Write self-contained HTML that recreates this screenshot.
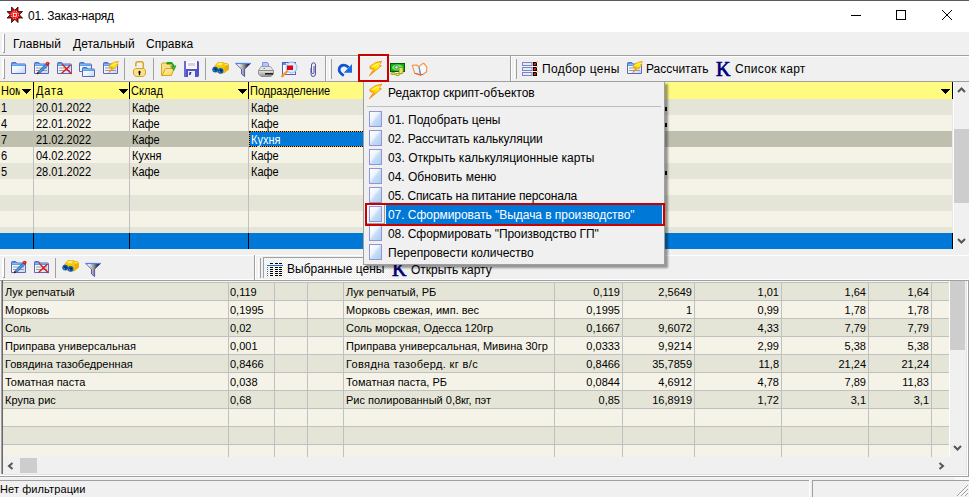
<!DOCTYPE html>
<html><head><meta charset="utf-8">
<style>
*{margin:0;padding:0;box-sizing:border-box}
html,body{width:969px;height:497px;overflow:hidden;background:#f0f0f0;font-family:"Liberation Sans",sans-serif;position:relative}
.a{position:absolute}
.t12{font-size:12px;color:#000;white-space:nowrap;line-height:14px}
.t11{font-size:11px;color:#000;white-space:nowrap;line-height:13px}
.r{text-align:right}
.sy{transform:scaleY(1.125);transform-origin:0 0}
svg{position:absolute;overflow:visible}
</style></head><body>

<svg width="0" height="0" style="position:absolute"><defs>
<linearGradient id="fb" x1="0" y1="0" x2="1" y2="1"><stop offset="0" stop-color="#ffffff"/><stop offset="0.5" stop-color="#eef5fd"/><stop offset="1" stop-color="#b8d8f6"/></linearGradient>
<linearGradient id="sq" x1="0" y1="0" x2="1" y2="1"><stop offset="0" stop-color="#ffffff"/><stop offset="0.4" stop-color="#eef5fd"/><stop offset="0.55" stop-color="#c4dcf6"/><stop offset="1" stop-color="#a4d0f2"/></linearGradient>
<linearGradient id="lt" x1="0.8" y1="0" x2="0.2" y2="1"><stop offset="0" stop-color="#ffd000"/><stop offset="0.4" stop-color="#ffee00"/><stop offset="1" stop-color="#ff7800"/></linearGradient>
<linearGradient id="fun" x1="0" y1="0" x2="1" y2="0"><stop offset="0.2" stop-color="#ffffff"/><stop offset="0.55" stop-color="#909090"/><stop offset="0.85" stop-color="#202020"/></linearGradient>
<linearGradient id="yf" x1="0" y1="0" x2="1" y2="1"><stop offset="0" stop-color="#fff2b0"/><stop offset="1" stop-color="#f0d060"/></linearGradient>
<linearGradient id="pr" x1="0" y1="0" x2="0" y2="1"><stop offset="0" stop-color="#e8e8e8"/><stop offset="1" stop-color="#909090"/></linearGradient>
</defs></svg>
<div class="a" style="left:0px;top:0px;width:969px;height:1px;background:#5c5c5c;"></div>
<div class="a" style="left:0px;top:1px;width:969px;height:31px;background:#fff;"></div>
<div class="a t12" style="left:28px;top:9px;letter-spacing:-0.2px">01. Заказ-наряд</div>
<svg style="left:7px;top:7px" width="16" height="16" viewBox="0 0 16 16"><polygon transform="translate(0.3,0.3)" points="4.29,-0.26 7.50,3.00 10.71,-0.26 10.68,4.32 15.26,4.29 12.00,7.50 15.26,10.71 10.68,10.68 10.71,15.26 7.50,12.00 4.29,15.26 4.32,10.68 -0.26,10.71 3.00,7.50 -0.26,4.29 4.32,4.32" fill="#f00000" stroke="#000" stroke-width="0.8" stroke-linejoin="miter" stroke-miterlimit="10"/><circle cx="7.8" cy="7.8" r="3.6" fill="none" stroke="#fff" stroke-width="0.9" stroke-dasharray="1.1 1.1"/><rect x="6.3" y="6.3" width="3" height="3" fill="none" stroke="#fff" stroke-width="1"/><rect x="7.3" y="7.3" width="1" height="1" fill="#f00"/></svg>
<svg style="left:850px;top:9px" width="12" height="12"><path d="M1 6.5H11" stroke="#000" stroke-width="1"/></svg>
<svg style="left:895px;top:9px" width="12" height="12"><rect x="1.5" y="1.5" width="9" height="9" fill="none" stroke="#000" stroke-width="1"/></svg>
<svg style="left:941px;top:9px" width="12" height="12"><path d="M1 1L11 11M11 1L1 11" stroke="#000" stroke-width="1"/></svg>
<div class="a" style="left:0px;top:32px;width:969px;height:23px;background:#f0f0f0;"></div>
<div class="a" style="left:2px;top:34px;width:2px;height:19px;background:#fff;"></div>
<div class="a" style="left:4px;top:34px;width:1px;height:19px;background:#a0a0a0;"></div>
<div class="a" style="left:3px;top:52px;width:1px;height:1px;background:#a0a0a0;"></div>
<div class="a t12" style="left:13px;top:37px;">Главный</div>
<div class="a t12" style="left:73px;top:37px;">Детальный</div>
<div class="a t12" style="left:146px;top:37px;">Справка</div>
<div class="a" style="left:0px;top:55px;width:969px;height:1px;background:#a0a0a0;"></div>
<div class="a" style="left:0px;top:56px;width:969px;height:1px;background:#fff;"></div>
<div class="a" style="left:0px;top:81px;width:969px;height:1px;background:#a0a0a0;"></div>
<div class="a" style="left:2px;top:59px;width:2px;height:20px;background:#fff;"></div>
<div class="a" style="left:4px;top:59px;width:1px;height:20px;background:#a0a0a0;"></div>
<div class="a" style="left:3px;top:78px;width:1px;height:1px;background:#a0a0a0;"></div>
<div class="a" style="left:124px;top:58px;width:1px;height:22px;background:#a0a0a0;"></div>
<div class="a" style="left:153px;top:58px;width:1px;height:22px;background:#a0a0a0;"></div>
<div class="a" style="left:205px;top:58px;width:1px;height:22px;background:#a0a0a0;"></div>
<div class="a" style="left:325px;top:55px;width:1px;height:26px;background:#a0a0a0;"></div>
<div class="a" style="left:326px;top:56px;width:1px;height:25px;background:#fff;"></div>
<div class="a" style="left:329px;top:59px;width:1px;height:20px;background:#fff;"></div>
<div class="a" style="left:331px;top:59px;width:1px;height:20px;background:#a0a0a0;"></div>
<div class="a" style="left:510px;top:55px;width:1px;height:26px;background:#a0a0a0;"></div>
<div class="a" style="left:511px;top:56px;width:1px;height:25px;background:#fff;"></div>
<div class="a" style="left:514px;top:59px;width:1px;height:20px;background:#fff;"></div>
<div class="a" style="left:516px;top:59px;width:1px;height:20px;background:#a0a0a0;"></div>
<div class="a t12" style="left:542px;top:62px;letter-spacing:0.3px">Подбор цены</div>
<div class="a t12" style="left:646px;top:62px;">Рассчитать</div>
<div class="a t12" style="left:735px;top:62px;letter-spacing:0.3px">Список карт</div>
<svg style="left:11px;top:62px" width="16" height="14" viewBox="0 0 16 14"><path d="M0.5 11.5V1.2Q0.5 0.5 1.2 0.5H4.8L5.8 2H13.8Q14.5 2 14.5 2.7V11.5Z" fill="url(#fb)" stroke="#6664b4" stroke-width="1"/><rect x="1" y="1" width="4.6" height="1.3" fill="#3c9cf2"/><rect x="1" y="2.5" width="13" height="1.4" fill="#3c9cf2"/></svg>
<svg style="left:34px;top:61px" width="17" height="15" viewBox="0 0 17 15"><g transform="translate(0,1)"><path d="M0.5 11.5V1.2Q0.5 0.5 1.2 0.5H4.8L5.8 2H13.8Q14.5 2 14.5 2.7V11.5Z" fill="url(#fb)" stroke="#6664b4" stroke-width="1"/><rect x="1" y="1" width="4.6" height="1.3" fill="#3c9cf2"/><rect x="1" y="2.5" width="13" height="1.4" fill="#3c9cf2"/><rect x="2" y="5.5" width="11" height="1" fill="#9a9a9a"/><rect x="2" y="8" width="11" height="1" fill="#9a9a9a"/></g><path d="M3.5 12.2L5 9.8L12.2 2.6L14 4.4L6.8 11.6Z" fill="#4a94e8" stroke="#28508c" stroke-width="0.7" stroke-linejoin="round"/><path d="M3 13L3.6 11.4L4.8 12.4Z" fill="#202020" stroke="#202020" stroke-width="0.6"/><path d="M4.6 10.4L6.2 12" stroke="#b07030" stroke-width="1"/><circle cx="13.6" cy="2.6" r="1.9" fill="#d81818"/><circle cx="13.2" cy="2.2" r="0.7" fill="#f06060"/></svg>
<svg style="left:57px;top:62px" width="16" height="14" viewBox="0 0 16 14"><path d="M0.5 11.5V1.2Q0.5 0.5 1.2 0.5H4.8L5.8 2H13.8Q14.5 2 14.5 2.7V11.5Z" fill="url(#fb)" stroke="#6664b4" stroke-width="1"/><rect x="1" y="1" width="4.6" height="1.3" fill="#3c9cf2"/><rect x="1" y="2.5" width="13" height="1.4" fill="#3c9cf2"/><rect x="2" y="5.5" width="11" height="1" fill="#9a9a9a"/><rect x="2" y="8" width="11" height="1" fill="#9a9a9a"/><path d="M5 2L14.5 12M13.5 3L4.5 11.5" stroke="#e01818" stroke-width="1.3"/></svg>
<svg style="left:79px;top:62px" width="17" height="16" viewBox="0 0 17 16"><g><path d="M0.5 9.5V1.2Q0.5 0.5 1.2 0.5H4.8L5.8 2H11.8Q12.5 2 12.5 2.7V9.5Z" fill="url(#fb)" stroke="#6664b4" stroke-width="1"/><rect x="1" y="1" width="4.6" height="1.3" fill="#3c9cf2"/><rect x="1" y="2.5" width="11" height="1.4" fill="#3c9cf2"/></g><g transform="translate(3,5)"><path d="M0.5 9.5V1.2Q0.5 0.5 1.2 0.5H4.8L5.8 2H11.8Q12.5 2 12.5 2.7V9.5Z" fill="url(#fb)" stroke="#6664b4" stroke-width="1"/><rect x="1" y="1" width="4.6" height="1.3" fill="#3c9cf2"/><rect x="1" y="2.5" width="11" height="1.4" fill="#3c9cf2"/></g></svg>
<svg style="left:103px;top:61px" width="17" height="15" viewBox="0 0 17 15"><g transform="translate(0,1)"><path d="M0.5 11.5V1.2Q0.5 0.5 1.2 0.5H4.8L5.8 2H13.8Q14.5 2 14.5 2.7V11.5Z" fill="url(#fb)" stroke="#6664b4" stroke-width="1"/><rect x="1" y="1" width="4.6" height="1.3" fill="#3c9cf2"/><rect x="1" y="2.5" width="13" height="1.4" fill="#3c9cf2"/><rect x="2" y="5.5" width="11" height="1" fill="#9a9a9a"/><rect x="2" y="8" width="11" height="1" fill="#9a9a9a"/></g><g transform="translate(5.5,0.2)"><g transform="scale(0.78)"><path d="M0.8 5.4L6.5 1.6L12.8 0.2L10.2 4.2L12.4 4.8L0.3 14.8L4.8 8.2L1.2 7.8Z" fill="url(#lt)" stroke="#f08a10" stroke-width="0.8" stroke-linejoin="round"/><path d="M3 6L8 3.2L10.5 2.5L8.5 5.5" fill="none" stroke="#fff680" stroke-width="1"/></g></g></svg>
<svg style="left:133px;top:61px" width="14" height="17" viewBox="0 0 14 17"><path d="M2.8 5.6V3Q2.8 0.7 5 0.7H8.2Q10.3 0.7 10.3 3V7.5" fill="none" stroke="#d8a820" stroke-width="1.5"/><path d="M2.6 7.5H10.5L12.5 9V13L10.3 15.5H2.6L0.5 13V9Z" fill="#f8e090" stroke="#d4a41c" stroke-width="1"/><path d="M6.5 10.2V14.2" stroke="#000" stroke-width="1.3"/><path d="M4.9 11.5L6.5 9.5L8.1 11.5Z" fill="#000"/></svg>
<svg style="left:161px;top:62px" width="16" height="15" viewBox="0 0 16 15"><path d="M0.5 13.5V2Q0.5 1 1.5 1H5L6 2.5H10V13.5Z" fill="#f6e08c" stroke="#d8a818" stroke-width="1"/><path d="M1 13.5L4.5 6.5H13L10.5 13.5Z" fill="url(#yf)" stroke="#d8a818" stroke-width="1"/><path d="M5.5 1H10.5L12.8 4" fill="none" stroke="#18a020" stroke-width="1.8"/><path d="M10.2 4.2L15 3.8L12.8 8.5Z" fill="#30b830" stroke="#108018" stroke-width="0.5"/></svg>
<svg style="left:184px;top:61px" width="15" height="16" viewBox="0 0 15 16"><path d="M0 1L1 0H14L15 1V15L14 16H1L0 15Z" fill="#5252c6"/><rect x="0" y="0" width="2" height="16" fill="#6a6ad6"/><rect x="2" y="0" width="11" height="8" fill="#f6f6fc"/><rect x="4" y="2" width="7" height="3" fill="#d4d4d8"/><rect x="4" y="10" width="7" height="6" fill="#f0f0f0"/><path d="M5.5 11H7.5L6.5 14H5Z" fill="#2c2cb0"/></svg>
<svg style="left:212px;top:61px" width="17" height="13" viewBox="0 0 17 13"><path d="M2 6L6 1.5H11.5L13 2.5H15.5L16.5 3.5V8.5L12 12H7L2.5 10Z" fill="#f4c800" stroke="#d0a000" stroke-width="0.6" stroke-linejoin="round"/><path d="M4.5 4L7 1.8H11L9.5 4.5Z" fill="#ffec70"/><path d="M12 4L14 2.8H16L15 5Z" fill="#ffe860"/><path d="M12.5 5L16.3 3.8V8.3L12.5 11Z" fill="#e8b000"/><circle cx="3.2" cy="8.6" r="2.9" fill="#0c58b8"/><circle cx="8.6" cy="9.8" r="2.9" fill="#0c58b8"/><circle cx="3.4" cy="8.6" r="1.3" fill="#002a60"/><circle cx="8.8" cy="9.8" r="1.3" fill="#002a60"/><circle cx="2.2" cy="9.6" r="0.8" fill="#30a0ff"/><circle cx="7.6" cy="10.8" r="0.8" fill="#30a0ff"/></svg>
<svg style="left:235px;top:62px" width="16" height="16" viewBox="0 0 16 16"><path d="M0.8 1.5H15.5L9.6 7.2V14.5L6.5 12V7.2Z" fill="url(#fun)" stroke="#4c4cb0" stroke-width="0.9" stroke-linejoin="round"/><path d="M0.5 1.5H15.8" stroke="#4a86e8" stroke-width="1.3"/></svg>
<svg style="left:258px;top:61px" width="16" height="16" viewBox="0 0 16 16"><path d="M4.5 1.5H9.5L10.5 2.5V6H4.5Z" fill="#b4c4fc" stroke="#8090e0" stroke-width="1"/><path d="M3 5.5H12.5L15.5 9.5H0.5Z" fill="#e4e4e4" stroke="#909090" stroke-width="0.8"/><path d="M0.5 9.5H15.5V13L13 15.5H3L0.5 13Z" fill="url(#pr)" stroke="#808080" stroke-width="0.8"/><rect x="7" y="12" width="8" height="1.6" fill="#202020"/><rect x="5.5" y="7" width="1.5" height="1" fill="#30c030"/></svg>
<svg style="left:281px;top:61px" width="17" height="16" viewBox="0 0 17 16"><rect x="1.5" y="1.5" width="13" height="12" fill="#ffffff" stroke="#5c5cc0" stroke-width="1"/><rect x="2" y="2" width="3" height="2" fill="#3c9cf2"/><circle cx="10.5" cy="6.5" r="5.5" fill="#d8eefc" stroke="#90b8e8" stroke-width="1"/><rect x="6" y="4.5" width="6" height="4.5" fill="#e80010"/><path d="M1.2 15.2L6 10.5" stroke="#f09828" stroke-width="2.4" stroke-linecap="round"/></svg>
<svg style="left:309px;top:62px" width="8" height="15" viewBox="0 0 8 15"><path d="M2 6V12Q2 14.5 4 14.5Q6.5 14.5 6.5 12V3Q6.5 0.8 4.5 0.8Q2.5 0.8 2.5 3V10.5Q2.5 11.5 4 11.5Q5 11.5 5 10.5V4" fill="none" stroke="#5050a0" stroke-width="1"/></svg>
<svg style="left:337px;top:63px" width="16" height="14" viewBox="0 0 16 14"><path d="M6.8 12.6Q1.5 9.5 2.2 5.6Q3.5 1.2 8 2.2Q10 2.8 11.5 4.5" fill="none" stroke="#0a56d0" stroke-width="2.7"/><path d="M15 1V9.8H6.8Z" fill="#1a6ae6"/></svg>
<svg style="left:369px;top:61px" width="14" height="16" viewBox="0 0 14 16"><g transform="scale(1.0)"><path d="M0.8 5.4L6.5 1.6L12.8 0.2L10.2 4.2L12.4 4.8L0.3 14.8L4.8 8.2L1.2 7.8Z" fill="url(#lt)" stroke="#f08a10" stroke-width="0.8" stroke-linejoin="round"/><path d="M3 6L8 3.2L10.5 2.5L8.5 5.5" fill="none" stroke="#fff680" stroke-width="1"/></g></svg>
<svg style="left:390px;top:63px" width="15" height="13" viewBox="0 0 15 13"><rect x="0.5" y="0.5" width="14" height="8" fill="#10b010" stroke="#006000" stroke-width="1"/><ellipse cx="7.5" cy="4.5" rx="5.5" ry="3" fill="#60f060"/><circle cx="6.5" cy="4.3" r="1.8" fill="#d8d8d8" stroke="#505050" stroke-width="0.6"/><rect x="9" y="4.5" width="4" height="6" rx="0.8" fill="#e8e070" stroke="#908800" stroke-width="0.8"/><ellipse cx="3" cy="10.5" rx="2.3" ry="1" fill="#e8e070" stroke="#908800" stroke-width="0.8"/><ellipse cx="7.5" cy="11.5" rx="2.3" ry="1" fill="#e8e070" stroke="#908800" stroke-width="0.8"/></svg>
<svg style="left:411px;top:62px" width="17" height="14" viewBox="0 0 17 14"><path d="M1.2 3.2L5.5 3L8 4.8L9.6 13L7 12.2L3.8 11.3Z" fill="#e6f4fc" stroke="#f89038" stroke-width="1.1" stroke-linejoin="round"/><path d="M8 4.8L10.8 2.2L12.8 1.2L15.8 5.2L15.6 9.8L12.2 12.2L9.6 13Z" fill="#f4f9fd" stroke="#f89038" stroke-width="1.1" stroke-linejoin="round"/><path d="M3.8 11.3L7 12.2L9.6 13L12.2 12.2" fill="none" stroke="#f05010" stroke-width="1"/><path d="M8.2 5.5L9.6 12.8" stroke="#5a8ee0" stroke-width="1.1"/></svg>
<svg style="left:522px;top:62px" width="17" height="15" viewBox="0 0 17 15"><rect x="0.5" y="0.5" width="9.5" height="3" fill="#dceefc" stroke="#8282c4" stroke-width="1"/><rect x="11" y="0" width="4" height="4" fill="#000"/><rect x="11.8" y="1.2" width="1.8" height="1.8" fill="#ff3000"/><path d="M13 2L15.5 -0.5" stroke="#ff3000" stroke-width="0.8"/><rect x="0.5" y="5.5" width="9.5" height="3" fill="#dceefc" stroke="#8282c4" stroke-width="1"/><rect x="11" y="5" width="4" height="4" fill="#000"/><rect x="11.8" y="6.2" width="1.8" height="1.8" fill="#ff3000"/><path d="M13 7L15.5 4.5" stroke="#ff3000" stroke-width="0.8"/><rect x="0.5" y="10.5" width="9.5" height="3" fill="#dceefc" stroke="#8282c4" stroke-width="1"/><rect x="11" y="10" width="4" height="4" fill="#000"/><rect x="11.8" y="11.2" width="1.8" height="1.8" fill="#ff3000"/><path d="M13 12L15.5 9.5" stroke="#ff3000" stroke-width="0.8"/></svg>
<svg style="left:627px;top:61px" width="17" height="15" viewBox="0 0 17 15"><g transform="translate(0,1)"><path d="M0.5 11.5V1.2Q0.5 0.5 1.2 0.5H4.8L5.8 2H13.8Q14.5 2 14.5 2.7V11.5Z" fill="url(#fb)" stroke="#6664b4" stroke-width="1"/><rect x="1" y="1" width="4.6" height="1.3" fill="#3c9cf2"/><rect x="1" y="2.5" width="13" height="1.4" fill="#3c9cf2"/><rect x="2" y="5.5" width="11" height="1" fill="#9a9a9a"/><rect x="2" y="8" width="11" height="1" fill="#9a9a9a"/></g><g transform="translate(5.5,0.2)"><g transform="scale(0.78)"><path d="M0.8 5.4L6.5 1.6L12.8 0.2L10.2 4.2L12.4 4.8L0.3 14.8L4.8 8.2L1.2 7.8Z" fill="url(#lt)" stroke="#f08a10" stroke-width="0.8" stroke-linejoin="round"/><path d="M3 6L8 3.2L10.5 2.5L8.5 5.5" fill="none" stroke="#fff680" stroke-width="1"/></g></g></svg>
<div class="a" style="left:716px;top:59px;font-family:'Liberation Serif',serif;font-weight:normal;font-size:20px;line-height:20px;color:#00007a;-webkit-text-stroke:0.7px #00007a">K</div>
<div class="a" style="left:0px;top:82px;width:952px;height:17px;background:#fffa80;"></div>
<div class="a" style="left:0px;top:99px;width:952px;height:16px;background:#e5e5d7;"></div>
<div class="a" style="left:0px;top:115px;width:952px;height:16px;background:#f5f2e7;"></div>
<div class="a" style="left:0px;top:131px;width:952px;height:16px;background:#bfbfae;"></div>
<div class="a" style="left:0px;top:147px;width:952px;height:16px;background:#f5f2e7;"></div>
<div class="a" style="left:0px;top:163px;width:952px;height:16px;background:#e5e5d7;"></div>
<div class="a" style="left:0px;top:179px;width:952px;height:16px;background:#f5f2e7;"></div>
<div class="a" style="left:0px;top:195px;width:952px;height:16px;background:#e5e5d7;"></div>
<div class="a" style="left:0px;top:211px;width:952px;height:16px;background:#f5f2e7;"></div>
<div class="a" style="left:0px;top:227px;width:952px;height:6px;background:#e5e5d7;"></div>
<div class="a" style="left:0px;top:233px;width:952px;height:16px;background:#0078d7;"></div>
<div class="a" style="left:33px;top:82px;width:1px;height:17px;background:#000;"></div>
<div class="a" style="left:33px;top:99px;width:1px;height:134px;background:#c0c0c0;"></div>
<div class="a" style="left:33px;top:233px;width:1px;height:16px;background:#000;"></div>
<div class="a" style="left:129px;top:82px;width:1px;height:17px;background:#000;"></div>
<div class="a" style="left:129px;top:99px;width:1px;height:134px;background:#c0c0c0;"></div>
<div class="a" style="left:129px;top:233px;width:1px;height:16px;background:#000;"></div>
<div class="a" style="left:248px;top:82px;width:1px;height:17px;background:#000;"></div>
<div class="a" style="left:248px;top:99px;width:1px;height:134px;background:#c0c0c0;"></div>
<div class="a" style="left:248px;top:233px;width:1px;height:16px;background:#000;"></div>
<div class="a" style="left:952px;top:82px;width:1px;height:17px;background:#000;"></div>
<div class="a" style="left:952px;top:233px;width:1px;height:16px;background:#000;"></div>
<div class="a" style="left:952px;top:99px;width:1px;height:134px;background:#e8e8e8;"></div>
<div class="a t11 sy" style="left:1px;top:84px;width:19px;overflow:hidden">Номер</div>
<div class="a t11 sy" style="left:36px;top:84px;letter-spacing:0.8px">Дата</div>
<div class="a t11 sy" style="left:131px;top:84px;">Склад</div>
<div class="a t11 sy" style="left:250px;top:84px;">Подразделение</div>
<div class="a" style="left:22px;top:89px;width:9px;height:1px;background:#000;"></div>
<div class="a" style="left:23px;top:90px;width:7px;height:1px;background:#000;"></div>
<div class="a" style="left:24px;top:91px;width:5px;height:1px;background:#000;"></div>
<div class="a" style="left:25px;top:92px;width:3px;height:1px;background:#000;"></div>
<div class="a" style="left:26px;top:93px;width:1px;height:1px;background:#000;"></div>
<div class="a" style="left:119px;top:89px;width:9px;height:1px;background:#000;"></div>
<div class="a" style="left:120px;top:90px;width:7px;height:1px;background:#000;"></div>
<div class="a" style="left:121px;top:91px;width:5px;height:1px;background:#000;"></div>
<div class="a" style="left:122px;top:92px;width:3px;height:1px;background:#000;"></div>
<div class="a" style="left:123px;top:93px;width:1px;height:1px;background:#000;"></div>
<div class="a" style="left:238px;top:89px;width:9px;height:1px;background:#000;"></div>
<div class="a" style="left:239px;top:90px;width:7px;height:1px;background:#000;"></div>
<div class="a" style="left:240px;top:91px;width:5px;height:1px;background:#000;"></div>
<div class="a" style="left:241px;top:92px;width:3px;height:1px;background:#000;"></div>
<div class="a" style="left:242px;top:93px;width:1px;height:1px;background:#000;"></div>
<div class="a" style="left:941px;top:89px;width:9px;height:1px;background:#000;"></div>
<div class="a" style="left:942px;top:90px;width:7px;height:1px;background:#000;"></div>
<div class="a" style="left:943px;top:91px;width:5px;height:1px;background:#000;"></div>
<div class="a" style="left:944px;top:92px;width:3px;height:1px;background:#000;"></div>
<div class="a" style="left:945px;top:93px;width:1px;height:1px;background:#000;"></div>
<div class="a t11 sy" style="left:1px;top:101px;">1</div>
<div class="a t11 sy" style="left:36px;top:101px;">20.01.2022</div>
<div class="a t11 sy" style="left:132px;top:101px;">Кафе</div>
<div class="a t11 sy" style="left:251px;top:101px;">Кафе</div>
<div class="a t11 sy" style="left:1px;top:117px;">4</div>
<div class="a t11 sy" style="left:36px;top:117px;">22.01.2022</div>
<div class="a t11 sy" style="left:132px;top:117px;">Кафе</div>
<div class="a t11 sy" style="left:251px;top:117px;">Кафе</div>
<div class="a t11 sy" style="left:1px;top:133px;">7</div>
<div class="a t11 sy" style="left:36px;top:133px;">21.02.2022</div>
<div class="a t11 sy" style="left:132px;top:133px;">Кафе</div>
<div class="a" style="left:249px;top:131px;width:416px;height:16px;background:#0078d7;"></div>
<div class="a" style="left:249px;top:131px;width:416px;height:16px;border:1px solid #ff9a30"></div>
<div class="a" style="left:249px;top:131px;width:416px;height:16px;border:1px dotted #000"></div>
<div class="a t11 sy" style="left:251px;top:133px;color:#fff">Кухня</div>
<div class="a t11 sy" style="left:1px;top:149px;">6</div>
<div class="a t11 sy" style="left:36px;top:149px;">04.02.2022</div>
<div class="a t11 sy" style="left:132px;top:149px;">Кухня</div>
<div class="a t11 sy" style="left:251px;top:149px;">Кафе</div>
<div class="a t11 sy" style="left:1px;top:165px;">5</div>
<div class="a t11 sy" style="left:36px;top:165px;">28.01.2022</div>
<div class="a t11 sy" style="left:132px;top:165px;">Кафе</div>
<div class="a t11 sy" style="left:251px;top:165px;">Кафе</div>
<div class="a" style="left:953px;top:82px;width:16px;height:167px;background:#f0f0f0;"></div>
<div class="a" style="left:953px;top:82px;width:1px;height:167px;background:#fff;"></div>
<div class="a" style="left:954px;top:129px;width:15px;height:74px;background:#cdcdcd;"></div>
<svg style="left:957px;top:87px" width="9" height="6" viewBox="0 0 9 6"><path d="M1 5L4.5 1.5L8 5" fill="none" stroke="#555" stroke-width="2"/></svg>
<svg style="left:957px;top:238px" width="9" height="6" viewBox="0 0 9 6"><path d="M1 1L4.5 4.5L8 1" fill="none" stroke="#555" stroke-width="2"/></svg>
<div class="a" style="left:0px;top:249px;width:969px;height:6px;background:#f0f0f0;"></div>
<div class="a" style="left:0px;top:255px;width:969px;height:1px;background:#fff;"></div>
<div class="a" style="left:0px;top:279px;width:969px;height:1px;background:#fff;"></div>
<div class="a" style="left:0px;top:280px;width:969px;height:1px;background:#a0a0a0;"></div>
<div class="a" style="left:2px;top:258px;width:2px;height:20px;background:#fff;"></div>
<div class="a" style="left:4px;top:258px;width:1px;height:20px;background:#a0a0a0;"></div>
<div class="a" style="left:3px;top:277px;width:1px;height:1px;background:#a0a0a0;"></div>
<div class="a" style="left:55px;top:258px;width:1px;height:20px;background:#a0a0a0;"></div>
<div class="a" style="left:254px;top:255px;width:1px;height:25px;background:#a0a0a0;"></div>
<div class="a" style="left:255px;top:255px;width:1px;height:25px;background:#fff;"></div>
<div class="a" style="left:258px;top:258px;width:1px;height:20px;background:#fff;"></div>
<div class="a" style="left:260px;top:258px;width:1px;height:20px;background:#a0a0a0;"></div>
<div class="a" style="left:263px;top:257px;width:126px;height:21px;background:#f7f7f7;border-left:1px solid #a0a0a0;border-top:1px solid #a0a0a0;background:repeating-conic-gradient(#ffffff 0 25%,#ebebeb 0 50%) 0 0/2px 2px"></div>
<div class="a t12" style="left:287px;top:262px;">Выбранные цены</div>
<div class="a t12" style="left:411px;top:263px;">Открыть карту</div>
<svg style="left:11px;top:260px" width="17" height="15" viewBox="0 0 17 15"><g transform="translate(0,1)"><path d="M0.5 11.5V1.2Q0.5 0.5 1.2 0.5H4.8L5.8 2H13.8Q14.5 2 14.5 2.7V11.5Z" fill="url(#fb)" stroke="#6664b4" stroke-width="1"/><rect x="1" y="1" width="4.6" height="1.3" fill="#3c9cf2"/><rect x="1" y="2.5" width="13" height="1.4" fill="#3c9cf2"/><rect x="2" y="5.5" width="11" height="1" fill="#9a9a9a"/><rect x="2" y="8" width="11" height="1" fill="#9a9a9a"/></g><path d="M3.5 12.2L5 9.8L12.2 2.6L14 4.4L6.8 11.6Z" fill="#4a94e8" stroke="#28508c" stroke-width="0.7" stroke-linejoin="round"/><path d="M3 13L3.6 11.4L4.8 12.4Z" fill="#202020" stroke="#202020" stroke-width="0.6"/><path d="M4.6 10.4L6.2 12" stroke="#b07030" stroke-width="1"/><circle cx="13.6" cy="2.6" r="1.9" fill="#d81818"/><circle cx="13.2" cy="2.2" r="0.7" fill="#f06060"/></svg>
<svg style="left:34px;top:261px" width="16" height="14" viewBox="0 0 16 14"><path d="M0.5 11.5V1.2Q0.5 0.5 1.2 0.5H4.8L5.8 2H13.8Q14.5 2 14.5 2.7V11.5Z" fill="url(#fb)" stroke="#6664b4" stroke-width="1"/><rect x="1" y="1" width="4.6" height="1.3" fill="#3c9cf2"/><rect x="1" y="2.5" width="13" height="1.4" fill="#3c9cf2"/><rect x="2" y="5.5" width="11" height="1" fill="#9a9a9a"/><rect x="2" y="8" width="11" height="1" fill="#9a9a9a"/><path d="M5 2L14.5 12M13.5 3L4.5 11.5" stroke="#e01818" stroke-width="1.3"/></svg>
<svg style="left:62px;top:259px" width="17" height="13" viewBox="0 0 17 13"><path d="M2 6L6 1.5H11.5L13 2.5H15.5L16.5 3.5V8.5L12 12H7L2.5 10Z" fill="#f4c800" stroke="#d0a000" stroke-width="0.6" stroke-linejoin="round"/><path d="M4.5 4L7 1.8H11L9.5 4.5Z" fill="#ffec70"/><path d="M12 4L14 2.8H16L15 5Z" fill="#ffe860"/><path d="M12.5 5L16.3 3.8V8.3L12.5 11Z" fill="#e8b000"/><circle cx="3.2" cy="8.6" r="2.9" fill="#0c58b8"/><circle cx="8.6" cy="9.8" r="2.9" fill="#0c58b8"/><circle cx="3.4" cy="8.6" r="1.3" fill="#002a60"/><circle cx="8.8" cy="9.8" r="1.3" fill="#002a60"/><circle cx="2.2" cy="9.6" r="0.8" fill="#30a0ff"/><circle cx="7.6" cy="10.8" r="0.8" fill="#30a0ff"/></svg>
<svg style="left:85px;top:262px" width="16" height="16" viewBox="0 0 16 16"><path d="M0.8 1.5H15.5L9.6 7.2V14.5L6.5 12V7.2Z" fill="url(#fun)" stroke="#4c4cb0" stroke-width="0.9" stroke-linejoin="round"/><path d="M0.5 1.5H15.8" stroke="#4a86e8" stroke-width="1.3"/></svg>
<svg style="left:267px;top:263px" width="16" height="14" viewBox="0 0 16 14"><rect x="0" y="2" width="16" height="1" fill="#1c6ee0"/><rect x="3" y="0" width="3" height="1" fill="#000"/><rect x="8" y="0" width="3" height="1" fill="#000"/><rect x="12" y="0" width="3" height="1" fill="#000"/><rect x="3" y="4" width="3" height="1" fill="#000"/><rect x="8" y="4" width="3" height="1" fill="#000"/><rect x="12" y="4" width="3" height="1" fill="#000"/><rect x="0" y="4" width="1" height="1" fill="#1c6ee0"/><rect x="3" y="6" width="3" height="1" fill="#000"/><rect x="8" y="6" width="3" height="1" fill="#000"/><rect x="12" y="6" width="3" height="1" fill="#000"/><rect x="0" y="6" width="1" height="1" fill="#1c6ee0"/><rect x="3" y="8" width="3" height="1" fill="#000"/><rect x="8" y="8" width="3" height="1" fill="#000"/><rect x="12" y="8" width="3" height="1" fill="#000"/><rect x="0" y="8" width="1" height="1" fill="#1c6ee0"/><rect x="3" y="10" width="3" height="1" fill="#000"/><rect x="8" y="10" width="3" height="1" fill="#000"/><rect x="12" y="10" width="3" height="1" fill="#000"/><rect x="0" y="10" width="1" height="1" fill="#1c6ee0"/><rect x="3" y="12" width="3" height="1" fill="#000"/><rect x="8" y="12" width="3" height="1" fill="#000"/><rect x="12" y="12" width="3" height="1" fill="#000"/><rect x="0" y="12" width="1" height="1" fill="#1c6ee0"/></svg>
<div class="a" style="left:392px;top:259px;font-family:'Liberation Serif',serif;font-weight:normal;font-size:20px;line-height:20px;color:#00007a;-webkit-text-stroke:0.7px #00007a">K</div>
<div class="a" style="left:2px;top:280px;width:1px;height:194px;background:#696969;"></div>
<div class="a" style="left:1px;top:280px;width:1px;height:195px;background:#a0a0a0;"></div>
<div class="a" style="left:3px;top:281px;width:946px;height:176px;background:#f5f2e7;"></div>
<div class="a" style="left:3px;top:281px;width:946px;height:1px;background:#f7f4ea;"></div>
<div class="a" style="left:3px;top:282px;width:946px;height:18px;background:#e5e5d7;"></div>
<div class="a" style="left:3px;top:282px;width:946px;height:1px;background:#c0c0c0;"></div>
<div class="a" style="left:3px;top:300px;width:946px;height:18px;background:#f5f2e7;"></div>
<div class="a" style="left:3px;top:300px;width:946px;height:1px;background:#c0c0c0;"></div>
<div class="a" style="left:3px;top:318px;width:946px;height:18px;background:#e5e5d7;"></div>
<div class="a" style="left:3px;top:318px;width:946px;height:1px;background:#c0c0c0;"></div>
<div class="a" style="left:3px;top:336px;width:946px;height:18px;background:#f5f2e7;"></div>
<div class="a" style="left:3px;top:336px;width:946px;height:1px;background:#c0c0c0;"></div>
<div class="a" style="left:3px;top:354px;width:946px;height:18px;background:#e5e5d7;"></div>
<div class="a" style="left:3px;top:354px;width:946px;height:1px;background:#c0c0c0;"></div>
<div class="a" style="left:3px;top:372px;width:946px;height:18px;background:#f5f2e7;"></div>
<div class="a" style="left:3px;top:372px;width:946px;height:1px;background:#c0c0c0;"></div>
<div class="a" style="left:3px;top:390px;width:946px;height:18px;background:#e5e5d7;"></div>
<div class="a" style="left:3px;top:390px;width:946px;height:1px;background:#c0c0c0;"></div>
<div class="a" style="left:3px;top:408px;width:946px;height:18px;background:#f5f2e7;"></div>
<div class="a" style="left:3px;top:408px;width:946px;height:1px;background:#c0c0c0;"></div>
<div class="a" style="left:3px;top:426px;width:946px;height:18px;background:#e5e5d7;"></div>
<div class="a" style="left:3px;top:426px;width:946px;height:1px;background:#c0c0c0;"></div>
<div class="a" style="left:3px;top:444px;width:946px;height:13px;background:#f5f2e7;"></div>
<div class="a" style="left:3px;top:444px;width:946px;height:1px;background:#c0c0c0;"></div>
<div class="a" style="left:228px;top:282px;width:1px;height:175px;background:#c0c0c0;"></div>
<div class="a" style="left:274px;top:282px;width:1px;height:175px;background:#c0c0c0;"></div>
<div class="a" style="left:307px;top:282px;width:1px;height:175px;background:#c0c0c0;"></div>
<div class="a" style="left:343px;top:282px;width:1px;height:175px;background:#c0c0c0;"></div>
<div class="a" style="left:554px;top:282px;width:1px;height:175px;background:#c0c0c0;"></div>
<div class="a" style="left:622px;top:282px;width:1px;height:175px;background:#c0c0c0;"></div>
<div class="a" style="left:694px;top:282px;width:1px;height:175px;background:#c0c0c0;"></div>
<div class="a" style="left:781px;top:282px;width:1px;height:175px;background:#c0c0c0;"></div>
<div class="a" style="left:868px;top:282px;width:1px;height:175px;background:#c0c0c0;"></div>
<div class="a" style="left:931px;top:282px;width:1px;height:175px;background:#c0c0c0;"></div>
<div class="a t11" style="left:5px;top:286px;">Лук репчатый</div>
<div class="a t11" style="left:230px;top:286px;">0,119</div>
<div class="a t11" style="left:346px;top:286px;">Лук репчатый, РБ</div>
<div class="a t11 r" style="left:522px;top:286px;width:98px">0,119</div>
<div class="a t11 r" style="left:594px;top:286px;width:98px">2,5649</div>
<div class="a t11 r" style="left:681px;top:286px;width:98px">1,01</div>
<div class="a t11 r" style="left:768px;top:286px;width:98px">1,64</div>
<div class="a t11 r" style="left:831px;top:286px;width:98px">1,64</div>
<div class="a t11" style="left:5px;top:304px;">Морковь</div>
<div class="a t11" style="left:230px;top:304px;">0,1995</div>
<div class="a t11" style="left:346px;top:304px;">Морковь свежая, имп. вес</div>
<div class="a t11 r" style="left:522px;top:304px;width:98px">0,1995</div>
<div class="a t11 r" style="left:594px;top:304px;width:98px">1</div>
<div class="a t11 r" style="left:681px;top:304px;width:98px">0,99</div>
<div class="a t11 r" style="left:768px;top:304px;width:98px">1,78</div>
<div class="a t11 r" style="left:831px;top:304px;width:98px">1,78</div>
<div class="a t11" style="left:5px;top:322px;">Соль</div>
<div class="a t11" style="left:230px;top:322px;">0,02</div>
<div class="a t11" style="left:346px;top:322px;">Соль морская, Одесса 120гр</div>
<div class="a t11 r" style="left:522px;top:322px;width:98px">0,1667</div>
<div class="a t11 r" style="left:594px;top:322px;width:98px">9,6072</div>
<div class="a t11 r" style="left:681px;top:322px;width:98px">4,33</div>
<div class="a t11 r" style="left:768px;top:322px;width:98px">7,79</div>
<div class="a t11 r" style="left:831px;top:322px;width:98px">7,79</div>
<div class="a t11" style="left:5px;top:340px;">Приправа универсальная</div>
<div class="a t11" style="left:230px;top:340px;">0,001</div>
<div class="a t11" style="left:346px;top:340px;">Приправа универсальная, Мивина 30гр</div>
<div class="a t11 r" style="left:522px;top:340px;width:98px">0,0333</div>
<div class="a t11 r" style="left:594px;top:340px;width:98px">9,9214</div>
<div class="a t11 r" style="left:681px;top:340px;width:98px">2,99</div>
<div class="a t11 r" style="left:768px;top:340px;width:98px">5,38</div>
<div class="a t11 r" style="left:831px;top:340px;width:98px">5,38</div>
<div class="a t11" style="left:5px;top:358px;">Говядина тазобедренная</div>
<div class="a t11" style="left:230px;top:358px;">0,8466</div>
<div class="a t11" style="left:346px;top:358px;letter-spacing:0.35px">Говядна тазоберд. кг в/с</div>
<div class="a t11 r" style="left:522px;top:358px;width:98px">0,8466</div>
<div class="a t11 r" style="left:594px;top:358px;width:98px">35,7859</div>
<div class="a t11 r" style="left:681px;top:358px;width:98px">11,8</div>
<div class="a t11 r" style="left:768px;top:358px;width:98px">21,24</div>
<div class="a t11 r" style="left:831px;top:358px;width:98px">21,24</div>
<div class="a t11" style="left:5px;top:376px;">Томатная паста</div>
<div class="a t11" style="left:230px;top:376px;">0,038</div>
<div class="a t11" style="left:346px;top:376px;">Томатная паста, РБ</div>
<div class="a t11 r" style="left:522px;top:376px;width:98px">0,0844</div>
<div class="a t11 r" style="left:594px;top:376px;width:98px">4,6912</div>
<div class="a t11 r" style="left:681px;top:376px;width:98px">4,78</div>
<div class="a t11 r" style="left:768px;top:376px;width:98px">7,89</div>
<div class="a t11 r" style="left:831px;top:376px;width:98px">11,83</div>
<div class="a t11" style="left:5px;top:394px;">Крупа рис</div>
<div class="a t11" style="left:230px;top:394px;">0,68</div>
<div class="a t11" style="left:346px;top:394px;">Рис полированный 0,8кг, пэт</div>
<div class="a t11 r" style="left:522px;top:394px;width:98px">0,85</div>
<div class="a t11 r" style="left:594px;top:394px;width:98px">16,8919</div>
<div class="a t11 r" style="left:681px;top:394px;width:98px">1,72</div>
<div class="a t11 r" style="left:768px;top:394px;width:98px">3,1</div>
<div class="a t11 r" style="left:831px;top:394px;width:98px">3,1</div>
<div class="a" style="left:949px;top:281px;width:20px;height:176px;background:#f0f0f0;"></div>
<div class="a" style="left:949px;top:281px;width:1px;height:176px;background:#fff;"></div>
<div class="a" style="left:950px;top:281px;width:15px;height:69px;background:#cdcdcd;"></div>
<div class="a" style="left:3px;top:457px;width:946px;height:17px;background:#f0f0f0;"></div>
<div class="a" style="left:20px;top:458px;width:17px;height:15px;background:#cdcdcd;"></div>
<svg style="left:7px;top:462px" width="7" height="8" viewBox="0 0 7 8"><path d="M5.5 1L2 4L5.5 7" fill="none" stroke="#555" stroke-width="2"/></svg>
<svg style="left:938px;top:462px" width="7" height="8" viewBox="0 0 7 8"><path d="M1.5 1L5 4L1.5 7" fill="none" stroke="#555" stroke-width="2"/></svg>
<svg style="left:953px;top:445px" width="9" height="6" viewBox="0 0 9 6"><path d="M1 1L4.5 4.5L8 1" fill="none" stroke="#555" stroke-width="2"/></svg>
<div class="a" style="left:0px;top:474px;width:969px;height:23px;background:#f0f0f0;"></div>
<div class="a" style="left:0px;top:475px;width:969px;height:1px;background:#fff;"></div>
<div class="a" style="left:0px;top:476px;width:969px;height:1px;background:#a0a0a0;"></div>
<div class="a" style="left:0px;top:477px;width:969px;height:1px;background:#f8f6ee;"></div>
<div class="a" style="left:966px;top:281px;width:1px;height:193px;background:#e4e4e4;"></div>
<div class="a" style="left:3px;top:474px;width:964px;height:1px;background:#e4e4e4;"></div>
<div class="a" style="left:967px;top:281px;width:1px;height:195px;background:#fff;"></div>
<div class="a" style="left:968px;top:280px;width:1px;height:197px;background:#a0a0a0;"></div>
<div class="a" style="left:955px;top:477px;width:14px;height:3px;background:#fafafa;"></div>
<div class="a" style="left:0px;top:480px;width:809px;height:1px;background:#a0a0a0;"></div>
<div class="a" style="left:809px;top:480px;width:1px;height:17px;background:#fff;"></div>
<div class="a" style="left:812px;top:480px;width:157px;height:1px;background:#a0a0a0;"></div>
<div class="a" style="left:812px;top:480px;width:1px;height:17px;background:#a0a0a0;"></div>
<svg style="left:955px;top:483px" width="14" height="14" viewBox="0 0 14 14"><path d="M13 2L2 13M13 6L6 13M13 10L10 13" stroke="#a0a0a0" stroke-width="1"/><path d="M13.5 3L3 13.5M13.5 7L7 13.5M13.5 11L11 13.5" stroke="#fff" stroke-width="1"/></svg>
<div class="a t11" style="left:0px;top:483px;letter-spacing:0.1px">Нет фильтрации</div>
<div class="a" style="left:665px;top:107px;width:2px;height:4px;background:#000;"></div>
<div class="a" style="left:665px;top:123px;width:2px;height:4px;background:#000;"></div>
<div class="a" style="left:665px;top:171px;width:2px;height:4px;background:#000;"></div>
<div class="a" style="left:363px;top:81px;width:302px;height:184px;background:#f0f0f0;border:1px solid #a0a0a0;box-shadow:3px 3px 2px rgba(0,0,0,0.38)"></div>
<div class="a" style="left:367px;top:106px;width:294px;height:1px;background:#bdbdbd;"></div>
<div class="a t12" style="left:388px;top:86px;">Редактор скрипт-объектов</div>
<svg style="left:369px;top:84px" width="15" height="16" viewBox="0 0 15 16"><g transform="scale(1.0)"><path d="M0.8 5.4L6.5 1.6L12.8 0.2L10.2 4.2L12.4 4.8L0.3 14.8L4.8 8.2L1.2 7.8Z" fill="url(#lt)" stroke="#f08a10" stroke-width="0.8" stroke-linejoin="round"/><path d="M3 6L8 3.2L10.5 2.5L8.5 5.5" fill="none" stroke="#fff680" stroke-width="1"/></g></svg>
<div class="a t12" style="left:388px;top:113px;letter-spacing:0px">01. Подобрать цены</div>
<svg style="left:369px;top:111px" width="13" height="16" viewBox="0 0 13 16"><rect x="0.5" y="0.5" width="12" height="15" fill="url(#sq)" stroke="#9494d4" stroke-width="1"/></svg>
<div class="a t12" style="left:388px;top:132px;letter-spacing:-0.06px">02. Рассчитать калькуляции</div>
<svg style="left:369px;top:130px" width="13" height="16" viewBox="0 0 13 16"><rect x="0.5" y="0.5" width="12" height="15" fill="url(#sq)" stroke="#9494d4" stroke-width="1"/></svg>
<div class="a t12" style="left:388px;top:151px;letter-spacing:0.03px">03. Открыть калькуляционные карты</div>
<svg style="left:369px;top:149px" width="13" height="16" viewBox="0 0 13 16"><rect x="0.5" y="0.5" width="12" height="15" fill="url(#sq)" stroke="#9494d4" stroke-width="1"/></svg>
<div class="a t12" style="left:388px;top:170px;letter-spacing:0px">04. Обновить меню</div>
<svg style="left:369px;top:168px" width="13" height="16" viewBox="0 0 13 16"><rect x="0.5" y="0.5" width="12" height="15" fill="url(#sq)" stroke="#9494d4" stroke-width="1"/></svg>
<div class="a t12" style="left:388px;top:189px;letter-spacing:-0.16px">05. Списать на питание персонала</div>
<svg style="left:369px;top:187px" width="13" height="16" viewBox="0 0 13 16"><rect x="0.5" y="0.5" width="12" height="15" fill="url(#sq)" stroke="#9494d4" stroke-width="1"/></svg>
<div class="a" style="left:386px;top:205px;width:276px;height:19px;background:#0078d7;"></div>
<div class="a" style="left:367px;top:205px;width:1px;height:19px;background:#fff;"></div>
<div class="a" style="left:367px;top:205px;width:18px;height:1px;background:#fff;"></div>
<div class="a" style="left:384px;top:205px;width:1px;height:19px;background:#a0a0a0;"></div>
<div class="a" style="left:367px;top:223px;width:18px;height:1px;background:#a0a0a0;"></div>
<div class="a t12" style="left:388px;top:208px;color:#fff;letter-spacing:-0.05px">07. Сформировать "Выдача в производство"</div>
<svg style="left:369px;top:206px" width="13" height="16" viewBox="0 0 13 16"><rect x="0.5" y="0.5" width="12" height="15" fill="url(#sq)" stroke="#9494d4" stroke-width="1"/></svg>
<div class="a t12" style="left:388px;top:227px;letter-spacing:-0.07px">08. Сформировать "Производство ГП"</div>
<svg style="left:369px;top:225px" width="13" height="16" viewBox="0 0 13 16"><rect x="0.5" y="0.5" width="12" height="15" fill="url(#sq)" stroke="#9494d4" stroke-width="1"/></svg>
<div class="a t12" style="left:388px;top:246px;letter-spacing:0px">Перепровести количество</div>
<svg style="left:369px;top:244px" width="13" height="16" viewBox="0 0 13 16"><rect x="0.5" y="0.5" width="12" height="15" fill="url(#sq)" stroke="#9494d4" stroke-width="1"/></svg>
<div class="a" style="left:358px;top:54px;width:31px;height:28px;border:2px solid #c80000"></div>
<div class="a" style="left:365px;top:203px;width:300px;height:23px;border:2px solid #c80000"></div>
</body></html>
